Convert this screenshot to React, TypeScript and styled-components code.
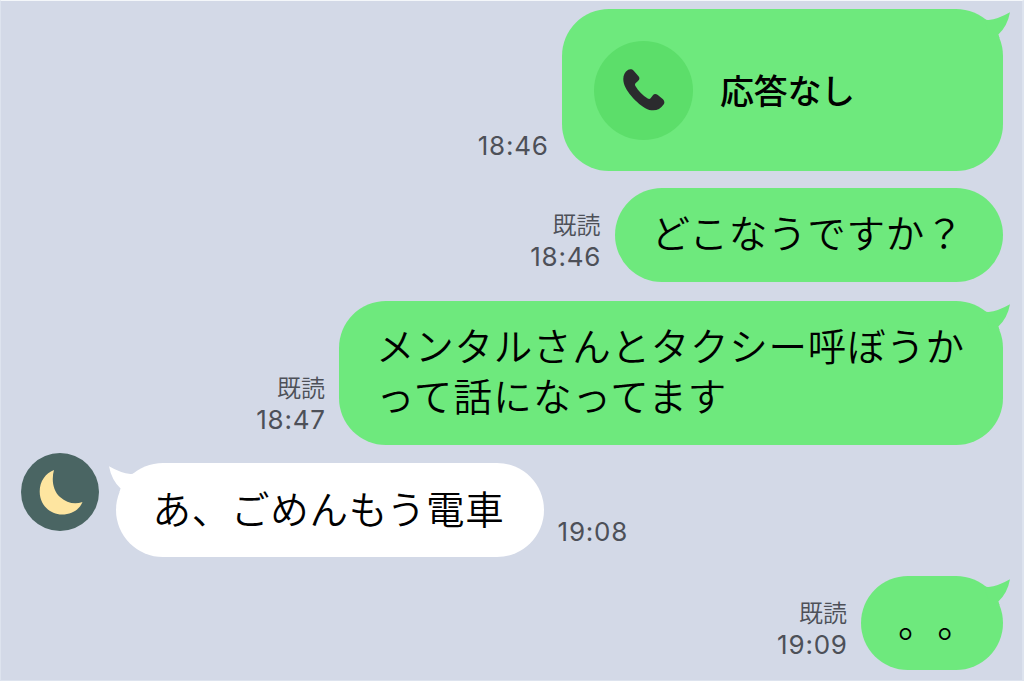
import styled, { createGlobalStyle } from 'styled-components';

type Side = 'left' | 'right';

interface Message {
  id: number;
  side: Side;
  lines: string[];
  time: string;
  read?: boolean;
  tail?: boolean;
  call?: boolean;
  width: number;
  height: number;
  gap: number;
}

const messages: Message[] = [
  { id: 1, side: 'right', lines: ['応答なし'], time: '18:46', tail: true, call: true, width: 440.5, height: 162, gap: 0 },
  { id: 2, side: 'right', lines: ['どこなうですか？'], time: '18:46', read: true, width: 388, height: 94, gap: 16.5 },
  {
    id: 3,
    side: 'right',
    lines: ['メンタルさんとタクシー呼ぼうか', 'って話になってます'],
    time: '18:47',
    read: true,
    tail: true,
    width: 663.5,
    height: 144,
    gap: 19,
  },
  { id: 4, side: 'left', lines: ['あ、ごめんもう電車'], time: '19:08', tail: true, width: 428, height: 94, gap: 18.5 },
  { id: 5, side: 'right', lines: ['。。'], time: '19:09', read: true, tail: true, width: 141.5, height: 94, gap: 19 },
];

// 吹き出しのしっぽ（左側は反転して使う）
const BubbleTail = ({ side }: { side: Side }) => (
  <Tail $side={side} viewBox="0 0 30 32" aria-hidden="true">
    <path d="M4 10 Q6.5 11.2 8.5 11 Q18 10.2 30 3.3 Q27.5 17 18.4 25.5 L19.5 29 L10 29 Z" />
  </Tail>
);

const PhoneIcon = () => (
  <svg width="42" height="42" viewBox="0 0 42 42" aria-hidden="true">
    <path
      fill="#2b2b2e"
      d="M5.2 .8 C7 -.2 9.2 .1 10.7 1.7 L15.5 7.3 C16.9 9 16.6 10.7 15 12 L12.5 14.2 C11.9 15 11.8 15.9 12.4 17 C15.5 22 19.7 26.5 24.7 29.6 C25.9 30.3 26.8 30.2 27.6 29.3 L29.7 26.4 C31 24.8 32.8 24.5 34.5 25.8 L40 30.3 C41.6 31.8 41.8 33.8 40.6 35.5 C37.4 40.1 33.4 41.9 28.2 41.2 C19 39.8 3.8 24.6 .9 14.4 C-.6 8.8 .6 3.5 5.2 .8 Z"
    />
  </svg>
);

const MoonIcon = () => (
  <svg width="78" height="78" viewBox="0 0 78 78" aria-hidden="true">
    <path fill="#fee5a0" d="M33 17 C24.5 20 18.7 28.5 18.7 38.5 C18.7 52 29 61.5 41 61.5 C51 61.5 58.5 56.5 61.5 49 C54 51.8 46 50.3 39 44 C31.5 37 30.5 26 33 17 Z" />
  </svg>
);

const App = () => {
  return (
    <>
      <GlobalStyle />
      <ChatRoom>
        {messages.map((message) => (
          <Row key={message.id} $side={message.side} $gap={message.gap}>
            {message.side === 'left' && (
              <Avatar>
                <MoonIcon />
              </Avatar>
            )}
            <Bubble $side={message.side} $width={message.width} $height={message.height}>
              {message.tail && <BubbleTail side={message.side} />}
              {message.call ? (
                <CallContent>
                  <CallCircle>
                    <PhoneIcon />
                  </CallCircle>
                  <CallLabel>{message.lines[0]}</CallLabel>
                </CallContent>
              ) : (
                <MessageText>
                  {message.lines.map((line) => (
                    <p key={line}>{line}</p>
                  ))}
                </MessageText>
              )}
            </Bubble>
            <Meta>
              {message.read && <ReadMark>既読</ReadMark>}
              <Time>{message.time}</Time>
            </Meta>
          </Row>
        ))}
      </ChatRoom>
    </>
  );
};

const GlobalStyle = createGlobalStyle`
  * {
    box-sizing: border-box;
  }
  body {
    margin: 0;
    background: #d3d9e7;
    font-family: 'Noto Sans CJK JP', sans-serif;
  }
  p {
    margin: 0;
  }
`;

const ChatRoom = styled.main`
  width: 1024px;
  height: 681px;
  padding: 8px 19.5px 0 20px;
  border: 1px solid #dde3ee;
  border-right-width: 2px;
  border-top-color: #f4f7fa;
  overflow: hidden;
`;

const Row = styled.div<{ $side: Side; $gap: number }>`
  display: flex;
  flex-direction: ${({ $side }) => ($side === 'right' ? 'row-reverse' : 'row')};
  align-items: flex-end;
  margin-top: ${({ $gap }) => $gap}px;
`;

const Avatar = styled.div`
  align-self: flex-start;
  width: 78px;
  height: 78px;
  margin: -10px 16.5px 0 0;
  border-radius: 50%;
  background: #4a6563;
`;

const Bubble = styled.div<{ $side: Side; $width: number; $height: number }>`
  position: relative;
  display: flex;
  align-items: center;
  flex-shrink: 0;
  width: ${({ $width }) => $width}px;
  height: ${({ $height }) => $height}px;
  border-radius: 47px;
  color: #000;
  background: ${({ $side }) => ($side === 'right' ? '#6ee97d' : '#fff')};
  fill: ${({ $side }) => ($side === 'right' ? '#6ee97d' : '#fff')};
`;

const Tail = styled.svg<{ $side: Side }>`
  position: absolute;
  top: 0;
  ${({ $side }) => $side}: -7px;
  width: 30px;
  height: 32px;
  transform: ${({ $side }) => ($side === 'left' ? 'scaleX(-1)' : 'none')};
`;

const CallContent = styled.div`
  display: flex;
  align-items: center;
  gap: 27px;
  padding-left: 32px;
`;

const CallCircle = styled.div`
  display: flex;
  align-items: center;
  justify-content: center;
  width: 99px;
  height: 99px;
  border-radius: 50%;
  background: #5cde6a;
`;

const CallLabel = styled.strong`
  font-size: 34px;
  font-weight: 500;
  letter-spacing: -0.3px;
  line-height: 50px;
  white-space: nowrap;
`;

const MessageText = styled.div`
  padding: 0 0 7px 37px;
  font-size: 38.5px;
  font-weight: 350;
  letter-spacing: 0.75px;
  line-height: 50px;
  white-space: nowrap;
  text-spacing-trim: space-all;
  p + p {
    letter-spacing: 1.2px;
  }
`;

const Meta = styled.div`
  display: flex;
  flex-direction: column;
  align-items: flex-end;
  margin: 0 14px 10px;
  color: #4d5058;
`;

const ReadMark = styled.span`
  margin-bottom: 2px;
  font-size: 24px;
  font-weight: 350;
  line-height: 31px;
`;

const Time = styled.time`
  margin-right: -0.8px;
  font-family: Inter, sans-serif;
  font-size: 26px;
  letter-spacing: 0.8px;
  line-height: 31px;
`;

export default App;
